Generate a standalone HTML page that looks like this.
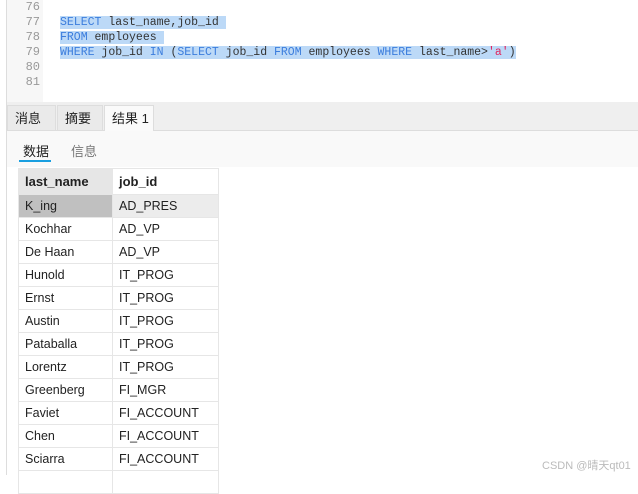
<!DOCTYPE html>
<html><head><meta charset="utf-8"><style>
body{margin:0;width:638px;height:475px;background:#fff;position:relative;overflow:hidden;font-family:"Liberation Sans","Noto Sans CJK SC",sans-serif;}
.a{position:absolute}
.code{font-family:"Liberation Mono","DejaVu Sans Mono",monospace;font-size:11.5px;line-height:15px;color:#333}
.ln{color:#999;font-family:"Liberation Mono",monospace;font-size:12px;line-height:15px;text-align:right;width:33px}
.k{color:#3b7ddd}.s{color:#e0245e}
.sel{background:#bcd9f7}
.tab{position:absolute;top:105px;height:25px;font-size:13px;line-height:26px;color:#222;border:1px solid #ddd;border-bottom:none;background:#eaeaea;box-sizing:border-box;padding-left:7px}
table{position:absolute;left:18px;top:168px;border-collapse:collapse;font-size:12.5px;color:#222;table-layout:fixed;width:201px}
td{border:1px solid #e6e6e6;padding:0 0 0 6px;overflow:hidden;white-space:nowrap}
tr{height:23px}
td.c1{width:87px}td.c2{width:99px}
tr.h{height:26px}
tr.h td{font-weight:bold;font-size:13px}
</style></head><body>
<div class="a" style="left:6px;top:0;width:1px;height:475px;background:#ddd"></div>
<div class="a" style="left:7px;top:0;width:36px;height:102px;background:#f7f7f7"></div>
<div class="a ln" style="left:7px;top:0">76<br>77<br>78<br>79<br>80<br>81</div>
<div class="a code" style="left:60px;top:15px;white-space:pre"><span class="sel"><span class="k">SELECT</span> last_name,job_id </span>
<span class="sel"><span class="k">FROM</span> employees </span>
<span class="sel"><span class="k">WHERE</span> job_id <span class="k">IN</span> (<span class="k">SELECT</span> job_id <span class="k">FROM</span> employees <span class="k">WHERE</span> last_name&gt;<span class="s">'a'</span>)</span></div>
<div class="a" style="left:7px;top:102px;width:631px;height:28px;background:#efefef;border-bottom:1px solid #ddd"></div>
<div class="tab" style="left:7px;width:49px">消息</div>
<div class="tab" style="left:57px;width:46px">摘要</div>
<div class="tab" style="left:104px;width:50px;background:#fafafa;height:26px">结果 1</div>
<div class="a" style="left:7px;top:131px;width:631px;height:36px;background:#f9f9f9"></div>
<div class="a" style="left:23px;top:141px;font-size:13px;color:#222">数据</div>
<div class="a" style="left:71px;top:141px;font-size:13px;color:#777">信息</div>
<div class="a" style="left:19px;top:160px;width:32px;height:2px;background:#1a9fe0"></div>
<table>
<tr class="h"><td class="c1" style="background:#e6e6e6">last_name</td><td class="c2">job_id</td></tr>
<tr><td class="c1" style="background:#c0c0c0">K_ing</td><td class="c2" style="background:#ececec">AD_PRES</td></tr>
<tr><td class="c1">Kochhar</td><td class="c2">AD_VP</td></tr>
<tr><td class="c1">De Haan</td><td class="c2">AD_VP</td></tr>
<tr><td class="c1">Hunold</td><td class="c2">IT_PROG</td></tr>
<tr><td class="c1">Ernst</td><td class="c2">IT_PROG</td></tr>
<tr><td class="c1">Austin</td><td class="c2">IT_PROG</td></tr>
<tr><td class="c1">Pataballa</td><td class="c2">IT_PROG</td></tr>
<tr><td class="c1">Lorentz</td><td class="c2">IT_PROG</td></tr>
<tr><td class="c1">Greenberg</td><td class="c2">FI_MGR</td></tr>
<tr><td class="c1">Faviet</td><td class="c2">FI_ACCOUNT</td></tr>
<tr><td class="c1">Chen</td><td class="c2">FI_ACCOUNT</td></tr>
<tr><td class="c1">Sciarra</td><td class="c2">FI_ACCOUNT</td></tr>
<tr><td class="c1"></td><td class="c2"></td></tr>
</table>
<div class="a" style="left:542px;top:457px;font-size:11px;color:#bbb">CSDN @晴天qt01</div>
</body></html>
